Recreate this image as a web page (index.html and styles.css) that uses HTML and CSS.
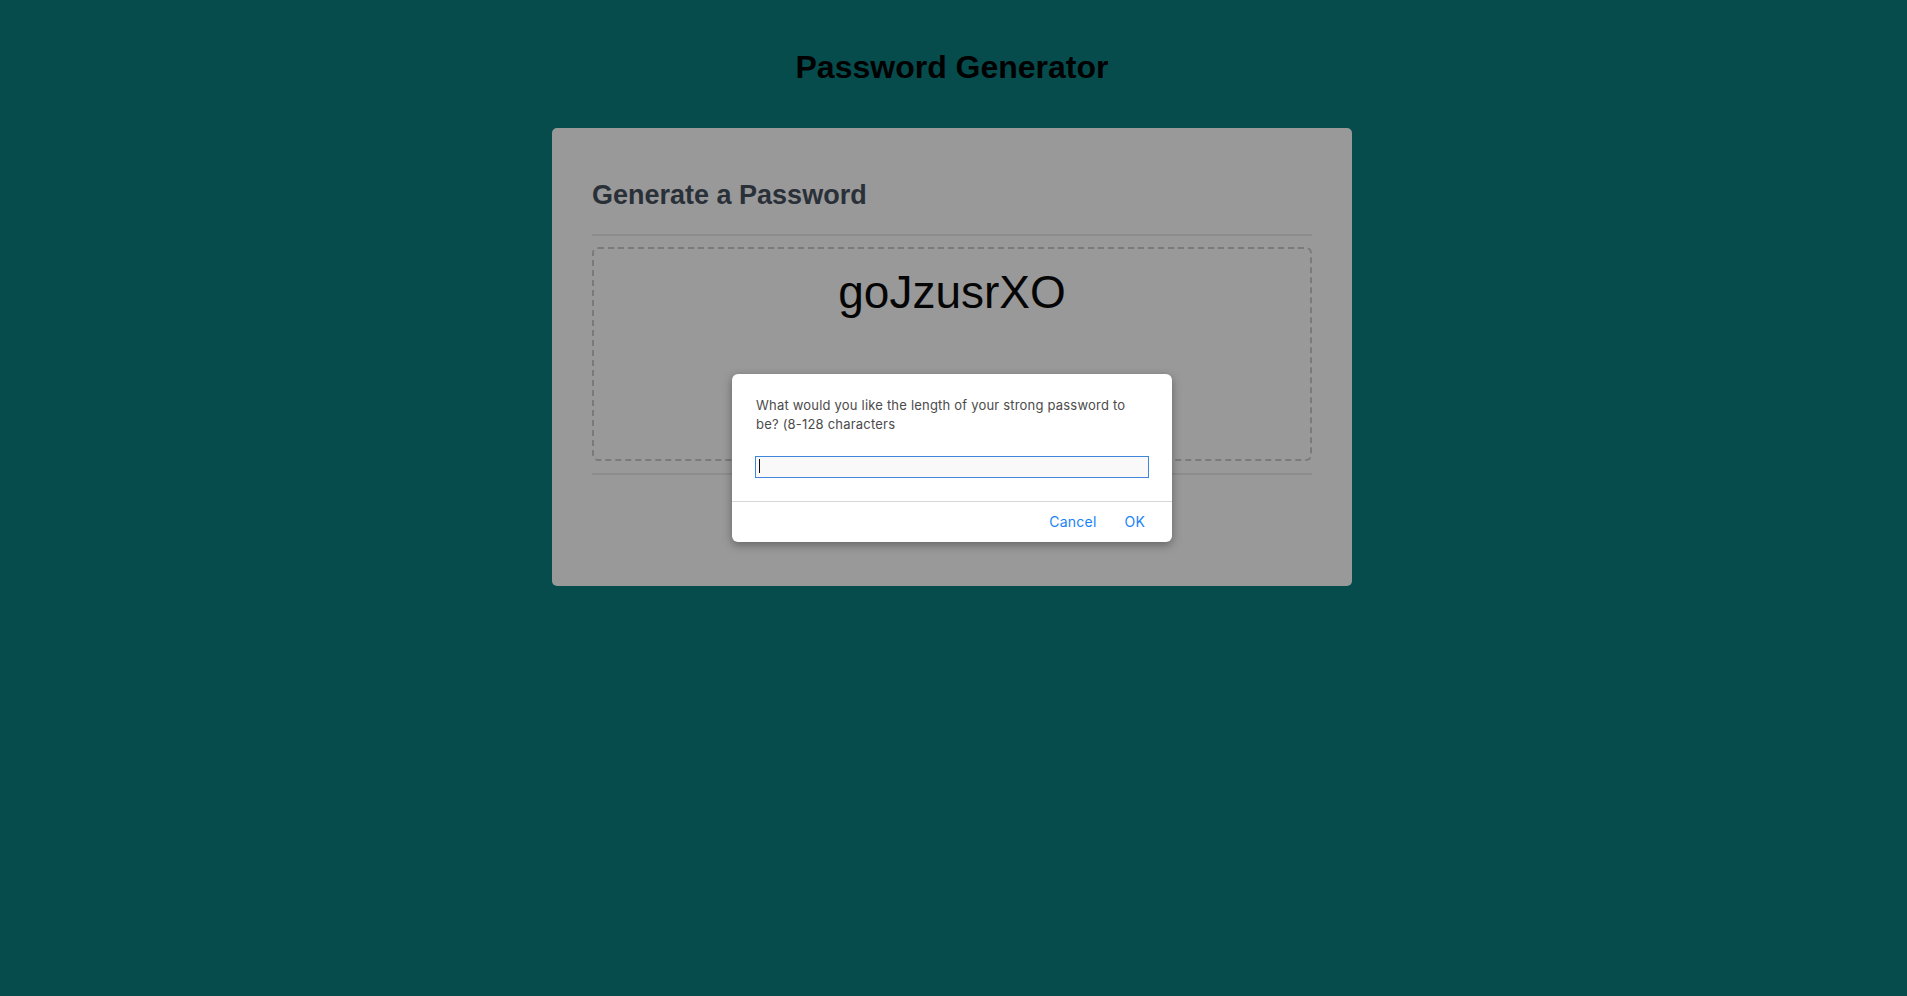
FILE: index.html
```html
<!DOCTYPE html>
<html lang="en">
<head>
<meta charset="utf-8">
<title>Password Generator</title>
<link rel="stylesheet" href="styles.css">
</head>
<body>
  <div class="wrapper">
    <header class="page-header">
      <h1>Password Generator</h1>
    </header>
    <div class="card">
      <div class="card-header">
        <h2>Generate a Password</h2>
      </div>
      <div class="card-body">
        <div class="password-box">
          <div class="password">goJzusrXO</div>
        </div>
      </div>
      <div class="card-footer"></div>
    </div>
  </div>

  <div class="dialog" role="dialog">
    <div class="dialog-body">
      <p class="dialog-message">What would you like the length of your strong password to<br>be? (8-128 characters</p>
      <div class="dialog-input"><span class="caret"></span></div>
    </div>
    <div class="dialog-footer">
      <button class="dialog-btn">Cancel</button>
      <button class="dialog-btn">OK</button>
    </div>
  </div>
</body>
</html>
```

FILE: styles.css
```css
html, body {
  margin: 0;
  padding: 0;
}

body {
  background: #074c4d;
  font-family: "Liberation Sans", Arial, Helvetica, sans-serif;
  min-height: 996px;
}

.wrapper {
  display: flex;
  flex-direction: column;
  align-items: center;
  padding-right: 3px;
}

.page-header {
  padding-top: 49px;
  height: 128px;
  box-sizing: border-box;
}

.page-header h1 {
  margin: 0;
  font-size: 32px;
  line-height: 37px;
  font-weight: bold;
  color: #000;
  text-align: center;
}

.card {
  width: 800px;
  box-sizing: border-box;
  background: #999999;
  border-radius: 5px;
  padding: 52px 40px 0;
  height: 458px;
  display: flex;
  flex-direction: column;
}

.card-header {
  border-bottom: 2px solid #8c8c8c;
  padding-bottom: 24px;
}

.card-header h2 {
  margin: 0;
  font-size: 27px;
  line-height: 30px;
  font-weight: bold;
  color: #2a3038;
}

.card-body {
  padding: 11px 0 12px;
  border-bottom: 2px solid #8c8c8c;
}

.password-box {
  height: 214px;
  box-sizing: border-box;
  border: 2px dashed #7a7a7a;
  border-radius: 6px;
  padding-top: 17px;
  display: flex;
  justify-content: center;
}

.password {
  font-size: 46px;
  line-height: 53px;
  color: #050505;
}

.card-footer {
  flex: 1;
}

.dialog {
  position: absolute;
  top: 374px;
  left: 732px;
  width: 440px;
  height: 168px;
  background: #ffffff;
  border-radius: 6px;
  box-shadow: 0 3px 10px rgba(0, 0, 0, 0.35);
  display: flex;
  flex-direction: column;
  font-family: Inter, "Noto Sans", sans-serif;
}

.dialog-body {
  padding: 22px 23px 0 23px;
  height: 128px;
  box-sizing: border-box;
  border-bottom: 1px solid #d8d8d8;
}

.dialog-message {
  margin: 0 0 0 1px;
  font-size: 13px;
  line-height: 19px;
  letter-spacing: 0.2px;
  color: #4b4b4b;
}

.dialog-input {
  margin-top: 22px;
  height: 22px;
  box-sizing: border-box;
  border: 1px solid #3f86dc;
  background: #f9f9f9;
  padding: 2px 0 0 3px;
}

.caret {
  display: block;
  width: 1px;
  height: 14px;
  background: #111;
}

.dialog-footer {
  flex: 1;
  display: flex;
  justify-content: flex-end;
  align-items: center;
  gap: 28px;
  padding: 0 27px 2px 0;
}

.dialog-btn {
  border: 0;
  background: none;
  padding: 0;
  font-family: Inter, "Noto Sans", sans-serif;
  font-size: 14px;
  line-height: 17px;
  letter-spacing: 0.2px;
  color: #1a82f6;
  cursor: pointer;
}
```
